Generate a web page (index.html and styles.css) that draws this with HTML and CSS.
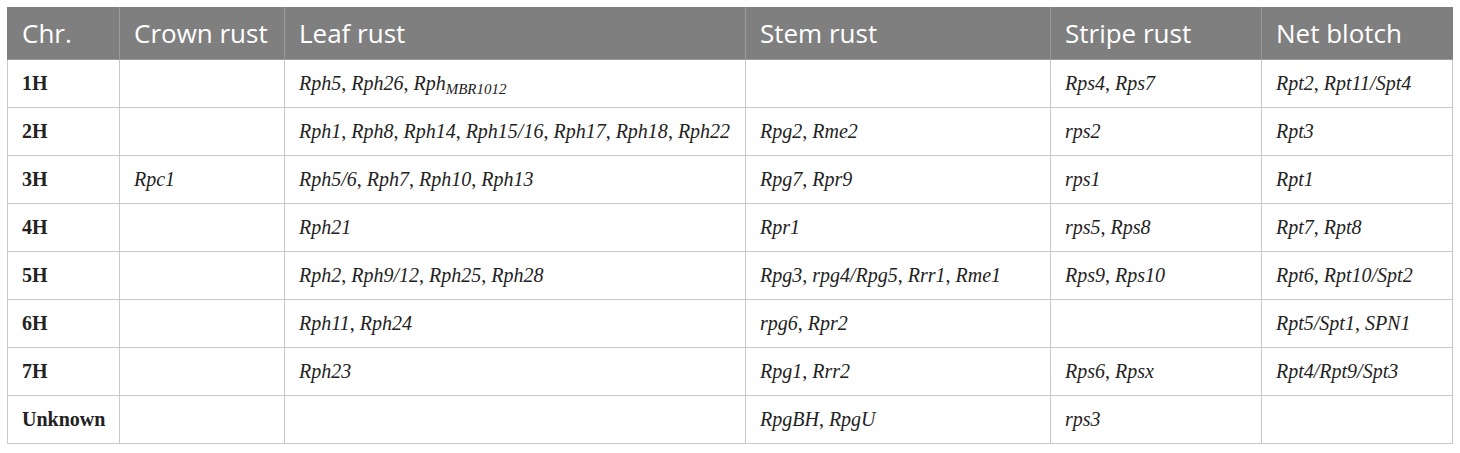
FILE: index.html
```html
<!DOCTYPE html>
<html>
<head>
<meta charset="utf-8">
<link rel="stylesheet" href="styles.css">
</head>
<body>
<div class="wrap">
<table class="genes">
  <colgroup>
    <col class="c1"><col class="c2"><col class="c3"><col class="c4"><col class="c5"><col class="c6">
  </colgroup>
  <thead>
    <tr><th>Chr.</th><th>Crown rust</th><th>Leaf rust</th><th>Stem rust</th><th>Stripe rust</th><th>Net blotch</th></tr>
  </thead>
  <tbody>
    <tr><td class="chr">1H</td><td></td><td><i>Rph5</i>, <i>Rph26</i>, <i>Rph<sub>MBR1012</sub></i></td><td></td><td><i>Rps4</i>, <i>Rps7</i></td><td><i>Rpt2</i>, <i>Rpt11/Spt4</i></td></tr>
    <tr><td class="chr">2H</td><td></td><td><i>Rph1</i>, <i>Rph8</i>, <i>Rph14</i>, <i>Rph15/16</i>, <i>Rph17</i>, <i>Rph18</i>, <i>Rph22</i></td><td><i>Rpg2</i>, <i>Rme2</i></td><td><i>rps2</i></td><td><i>Rpt3</i></td></tr>
    <tr><td class="chr">3H</td><td><i>Rpc1</i></td><td><i>Rph5/6</i>, <i>Rph7</i>, <i>Rph10</i>, <i>Rph13</i></td><td><i>Rpg7</i>, <i>Rpr9</i></td><td><i>rps1</i></td><td><i>Rpt1</i></td></tr>
    <tr><td class="chr">4H</td><td></td><td><i>Rph21</i></td><td><i>Rpr1</i></td><td><i>rps5</i>, <i>Rps8</i></td><td><i>Rpt7</i>, <i>Rpt8</i></td></tr>
    <tr><td class="chr">5H</td><td></td><td><i>Rph2</i>, <i>Rph9/12</i>, <i>Rph25</i>, <i>Rph28</i></td><td><i>Rpg3</i>, <i>rpg4/Rpg5</i>, <i>Rrr1</i>, <i>Rme1</i></td><td><i>Rps9</i>, <i>Rps10</i></td><td><i>Rpt6</i>, <i>Rpt10/Spt2</i></td></tr>
    <tr><td class="chr">6H</td><td></td><td><i>Rph11</i>, <i>Rph24</i></td><td><i>rpg6</i>, <i>Rpr2</i></td><td></td><td><i>Rpt5/Spt1</i>, <i>SPN1</i></td></tr>
    <tr><td class="chr">7H</td><td></td><td><i>Rph23</i></td><td><i>Rpg1</i>, <i>Rrr2</i></td><td><i>Rps6</i>, <i>Rpsx</i></td><td><i>Rpt4/Rpt9/Spt3</i></td></tr>
    <tr><td class="chr">Unknown</td><td></td><td></td><td><i>RpgBH</i>, <i>RpgU</i></td><td><i>rps3</i></td><td></td></tr>
  </tbody>
</table>
</div>
</body>
</html>
```
FILE: styles.css
```css
html, body {
  margin: 0;
  padding: 0;
  background: #ffffff;
}
.wrap {
  padding: 7px 8px 0 7px;
}
.genes {
  border-collapse: collapse;
  width: 1445px;
  table-layout: fixed;
  font-family: "Liberation Serif", "Times New Roman", serif;
  color: #222222;
}
.c1 { width: 112px; }
.c2 { width: 165px; }
.c3 { width: 461px; }
.c4 { width: 305px; }
.c5 { width: 211px; }
.c6 { width: 191px; }
.genes th {
  background: #7f7f7f;
  color: #ffffff;
  font-family: "Open Sans", "Noto Sans", sans-serif;
  font-weight: 400;
  font-size: 26px;
  text-align: left;
  height: 52px;
  padding: 0 14px;
  border: 1px solid #9b9b9b;
  border-top: none;
  box-sizing: border-box;
  vertical-align: middle;
  white-space: nowrap;
}
.genes th:first-child { border-left: 1px solid #7f7f7f; }
.genes th:last-child { border-right: 1px solid #7f7f7f; }
.genes td {
  border: 1px solid #c8c8c8;
  height: 48px;
  padding: 0 14px;
  font-size: 20px;
  vertical-align: middle;
  box-sizing: border-box;
  white-space: nowrap;
}
.genes td.chr {
  font-weight: 700;
  font-size: 20px;
}
.genes i { font-style: italic; }
.genes sub {
  font-size: 15px;
  vertical-align: -4px;
  line-height: 0;
}
```
